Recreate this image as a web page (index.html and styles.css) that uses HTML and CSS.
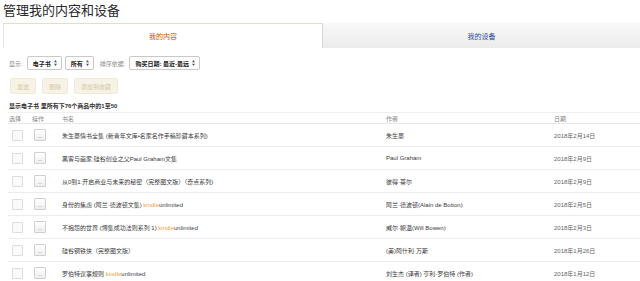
FILE: index.html
```html
<!DOCTYPE html>
<html lang="zh-CN">
<head>
    <meta charset="UTF-8">
    <title>管理我的内容和设备</title>
    <link rel="stylesheet" href="styles.css">
</head>
<body>
    <h1 class="page-title">管理我的内容和设备</h1>

    <!-- Tabs -->
    <div class="tabs">
        <div class="tab tab-active">我的内容</div>
        <div class="tab tab-other">我的设备</div>
    </div>

    <!-- Filters -->
    <div class="filters">
        <span class="filter-label">显示:</span>
        <span class="dropdown">电子书 <svg class="arrows" width="3" height="6" viewBox="0 0 3 6"><path d="M1.5 0 L3 2.3 L0 2.3 Z M1.5 6 L3 3.7 L0 3.7 Z" fill="#555"/></svg></span>
        <span class="dropdown">所有 <svg class="arrows" width="3" height="6" viewBox="0 0 3 6"><path d="M1.5 0 L3 2.3 L0 2.3 Z M1.5 6 L3 3.7 L0 3.7 Z" fill="#555"/></svg></span>
        <span class="filter-label sort-label">排序依据:</span>
        <span class="dropdown">购买日期: 最近-最远 <svg class="arrows" width="3" height="6" viewBox="0 0 3 6"><path d="M1.5 0 L3 2.3 L0 2.3 Z M1.5 6 L3 3.7 L0 3.7 Z" fill="#555"/></svg></span>
    </div>

    <div class="actions">
        <span class="action-btn">发送</span>
        <span class="action-btn">删除</span>
        <span class="action-btn">添加到收藏</span>
    </div>

    <div class="status">显示电子书 里所有下76个商品中的1至50</div>

    <table class="items">
        <tr class="head">
            <th class="col-select">选择</th>
            <th class="col-action">操作</th>
            <th class="col-title">书名</th>
            <th class="col-author">作者</th>
            <th class="col-date">日期</th>
        </tr>
        <tr>
            <td><span class="check"></span></td>
            <td><span class="more">...</span></td>
            <td>朱生豪情书全集 (新青年文库•名家名作手稿珍藏本系列)</td>
            <td>朱生豪</td>
            <td class="date">2018年2月14日</td>
        </tr>
        <tr>
            <td><span class="check"></span></td>
            <td><span class="more">...</span></td>
            <td>黑客与画家:硅谷创业之父Paul Graham文集</td>
            <td>Paul Graham</td>
            <td class="date">2018年2月9日</td>
        </tr>
        <tr>
            <td><span class="check"></span></td>
            <td><span class="more">...</span></td>
            <td>从0到1:开启商业与未来的秘密（完整图文版）（奇点系列)</td>
            <td>彼得·蒂尔</td>
            <td class="date">2018年2月9日</td>
        </tr>
        <tr>
            <td><span class="check"></span></td>
            <td><span class="more">...</span></td>
            <td>身份的焦虑 (阿兰·德波顿文集) <span class="ku"><span class="kindle">kindle</span>unlimited</span></td>
            <td>阿兰·德波顿(Alain de Botton)</td>
            <td class="date">2018年2月5日</td>
        </tr>
        <tr>
            <td><span class="check"></span></td>
            <td><span class="more">...</span></td>
            <td>不抱怨的世界 (博集成功法则系列 1) <span class="ku"><span class="kindle">kindle</span>unlimited</span></td>
            <td>威尔·鲍温(Will Bowen)</td>
            <td class="date">2018年2月3日</td>
        </tr>
        <tr>
            <td><span class="check"></span></td>
            <td><span class="more">...</span></td>
            <td>硅谷钢铁侠（完整图文版）</td>
            <td>(美)阿什利·万斯</td>
            <td class="date">2018年1月26日</td>
        </tr>
        <tr>
            <td><span class="check"></span></td>
            <td><span class="more">...</span></td>
            <td>罗伯特议事规则 <span class="ku"><span class="kindle">kindle</span>unlimited</span></td>
            <td>刘生杰 (译者) 亨利·罗伯特 (作者)</td>
            <td class="date">2018年1月12日</td>
        </tr>
        <tr>
            <td><span class="check"></span></td>
            <td><span class="more"></span></td>
            <td>&nbsp;</td>
            <td></td>
            <td class="date"></td>
        </tr>
    </table>
</body>
</html>
```

FILE: styles.css
```css
body {
    margin: 0;
    padding: 0;
    background: #fff;
    color: #333;
    font-family: "Liberation Sans", "Noto Sans CJK SC", sans-serif;
    overflow: hidden;
}
.page-title {
    margin: 0;
    padding: 2px 3px 0;
    height: 21px;
    font-size: 13px;
    font-weight: normal;
    line-height: 18px;
    color: #2a2a2a;
}
.tabs {
    display: flex;
    margin-left: 3px;
    height: 25px;
}
.tab {
    display: flex;
    align-items: center;
    justify-content: center;
    font-size: 7px;
}
.tab-active {
    width: 318px;
    border-top: 1px solid #eadcbc;
    border-left: 1px solid #e4e4e4;
    color: #c45500;
}
.tab-other {
    flex: 1;
    border-left: 1px solid #d8d8d8;
    background: linear-gradient(#f8f8f8, #ececec);
    color: #2d4a9b;
}
.filters {
    display: flex;
    align-items: center;
    margin: 8px 0 0 9px;
    height: 14px;
    font-size: 6px;
}
.filter-label {
    color: #888;
    margin-right: 4px;
}
.sort-label {
    margin-left: 3px;
}
.dropdown {
    display: flex;
    align-items: center;
    gap: 3px;
    height: 12px;
    padding: 0 4px 0 5px;
    margin-right: 3px;
    border: 1px solid #c9c9c9;
    border-radius: 2px;
    background: #fff;
    color: #222;
    font-weight: bold;
}
.arrows {
    display: block;
}
.actions {
    display: flex;
    gap: 6px;
    margin: 8px 0 0 10px;
    height: 16px;
}
.action-btn {
    display: flex;
    align-items: center;
    padding: 0 6px;
    background: #f7f2e6;
    border: 1px solid #f1ead9;
    border-radius: 2px;
    color: #d6c8a8;
    font-size: 6px;
}
.status {
    margin: 7px 0 0 9px;
    height: 11px;
    line-height: 11px;
    font-size: 6px;
    font-weight: bold;
    color: #333;
}
.items {
    width: 632px;
    margin-left: 8px;
    border-collapse: collapse;
    font-size: 6px;
    border-top: 1px solid #f0f0f0;
}
.items th {
    height: 10px;
    padding: 0;
    text-align: left;
    font-weight: normal;
    color: #888;
    border-bottom: 1px solid #e8e8e8;
}
.items td {
    height: 22px;
    padding: 0;
    border-bottom: 1px solid #ececec;
    color: #3a3a3a;
    white-space: nowrap;
}
.col-select {
    width: 23px;
    padding-left: 1px !important;
}
.col-action {
    width: 30px;
}
.col-title {
    width: 324px;
}
.col-author {
    width: 168px;
}
.items td.date {
    color: #666;
}
.check {
    display: block;
    width: 9px;
    height: 9px;
    margin-left: 4px;
    border: 1px solid #ddd;
    border-radius: 1px;
    background: #fafafa;
}
.more {
    display: flex;
    align-items: flex-end;
    justify-content: center;
    width: 10px;
    height: 10px;
    margin-left: 2px;
    border: 1px solid #d0d0d0;
    border-radius: 1px;
    background: linear-gradient(#fff, #efefef);
    font-size: 5px;
    line-height: 7px;
    color: #666;
}
.ku {
    color: #3d4450;
}
.kindle {
    color: #f0a23a;
}
```
